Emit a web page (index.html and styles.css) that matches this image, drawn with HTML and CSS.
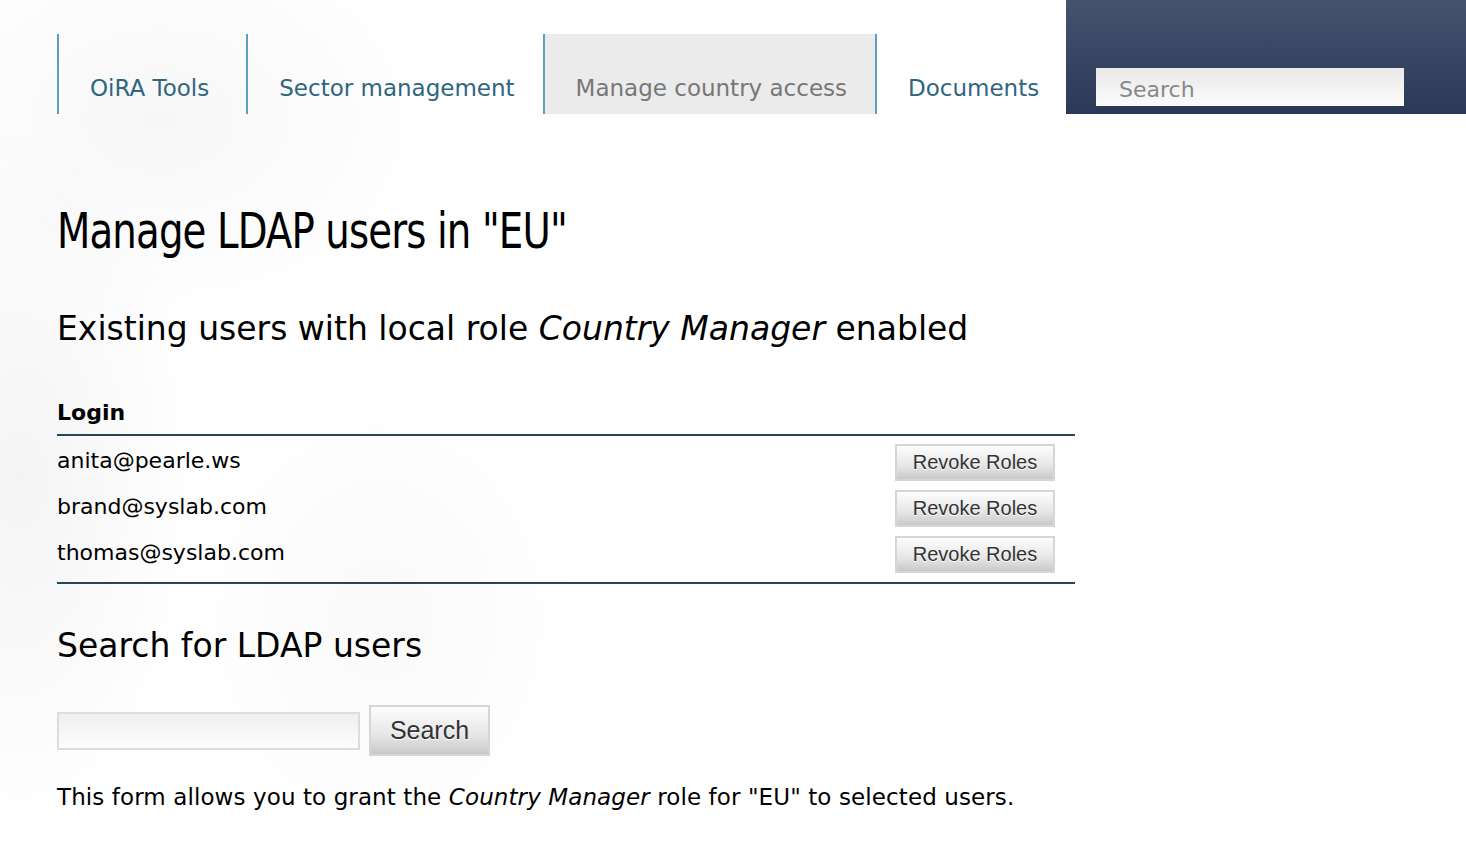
FILE: index.html
```html
<!DOCTYPE html>
<html lang="en">
<head>
<meta charset="utf-8">
<title>Manage LDAP users in "EU"</title>
<link rel="stylesheet" href="styles.css">
</head>
<body>
<div class="page">
  <header class="topbar">
    <nav class="tabs">
      <a class="tab" href="#">OiRA Tools</a>
      <a class="tab" href="#">Sector management</a>
      <a class="tab active" href="#">Manage country access</a>
      <a class="tab last" href="#">Documents</a>
    </nav>
    <div class="searchbox">
      <input class="site-search" type="text" placeholder="Search">
    </div>
  </header>

  <main class="content">
    <h1 class="title"><span class="title-text">Manage LDAP users in "EU"</span></h1>
    <h2 class="subtitle">Existing users with local role <em>Country Manager</em> enabled</h2>

    <table class="users">
      <thead>
        <tr><th class="login-col">Login</th><th class="action-col"></th></tr>
      </thead>
      <tbody>
        <tr><td>anita@pearle.ws</td><td class="action-col"><button class="btn small">Revoke Roles</button></td></tr>
        <tr><td>brand@syslab.com</td><td class="action-col"><button class="btn small">Revoke Roles</button></td></tr>
        <tr><td>thomas@syslab.com</td><td class="action-col"><button class="btn small">Revoke Roles</button></td></tr>
      </tbody>
    </table>

    <h2 class="subtitle search-title">Search for LDAP users</h2>
    <form class="search-form">
      <input class="user-search" type="text">
      <button class="btn large" type="button">Search</button>
    </form>
    <p class="note">This form allows you to grant the <em>Country Manager</em> role for "EU" to selected users.</p>
  </main>
</div>
</body>
</html>
```

FILE: styles.css
```css
html, body {
  margin: 0;
  padding: 0;
}
body {
  font-family: "DejaVu Sans", "Noto Sans", sans-serif;
  color: #000;
  background-color: #fff;
  background-image:
    radial-gradient(ellipse 260px 520px at 20px 480px, rgba(0,0,0,0.045), rgba(0,0,0,0) 70%),
    radial-gradient(ellipse 420px 300px at 160px 120px, rgba(0,0,0,0.03), rgba(0,0,0,0) 70%),
    radial-gradient(ellipse 300px 360px at 380px 620px, rgba(0,0,0,0.025), rgba(0,0,0,0) 70%);
  min-height: 868px;
}
.page {
  width: 1466px;
}
.topbar {
  display: flex;
  align-items: flex-start;
  height: 114px;
}
.tabs {
  display: flex;
  flex-shrink: 0;
  margin-top: 34px;
  margin-left: 57px;
  height: 80px;
}
.tab {
  display: flex;
  flex-shrink: 0;
  align-items: flex-end;
  white-space: nowrap;
  padding: 0 28px 12px 31px;
  box-sizing: border-box;
  height: 80px;
  border-left: 2px solid #5b9fc4;
  color: #2f6680;
  text-decoration: none;
  font-size: 23px;
  line-height: 28px;
}
.tab:first-child {
  padding-right: 37px;
}
.tab.last {
  padding-right: 26px;
}
.tab.active {
  background: #ebebeb;
  color: #777;
}
.searchbox {
  flex-shrink: 0;
  margin-left: auto;
  width: 400px;
  height: 114px;
  box-sizing: border-box;
  background: linear-gradient(#45536f, #2b3957);
  padding: 68px 62px 0 30px;
}
.site-search {
  width: 100%;
  height: 38px;
  box-sizing: border-box;
  border: none;
  outline: none;
  background: linear-gradient(#e9e9e9, #fbfbfb);
  padding: 4px 0 0 23px;
  font-family: "DejaVu Sans", sans-serif;
  font-size: 22px;
  color: #555;
}
.site-search::placeholder {
  color: #888;
}
.content {
  margin-left: 57px;
  width: 1018px;
}
.title {
  margin: 89px 0 0 0;
  font-weight: normal;
  font-size: 50px;
  font-stretch: condensed;
  line-height: 56px;
  letter-spacing: -1px;
  white-space: nowrap;
}
.title-text {
  display: inline-block;
  transform: scaleX(0.86);
  transform-origin: left center;
}
.subtitle {
  margin: 50px 0 0 0;
  font-weight: normal;
  font-size: 33px;
  line-height: 40px;
}
.users {
  width: 100%;
  margin-top: 51px;
  border-collapse: collapse;
  font-size: 22px;
}
.users th {
  text-align: left;
  padding: 0 0 8px 0;
  font-size: 22px;
  font-weight: bold;
  border-bottom: 2px solid #24475c;
  line-height: 26px;
}
.users td {
  padding: 4px 0 0 0;
  line-height: 42px;
  vertical-align: middle;
}
.users tbody tr:last-child td {
  border-bottom: 2px solid #24475c;
  padding-bottom: 8px;
}
.users td.action-col {
  text-align: right;
  padding-right: 20px;
}
.btn {
  font-family: "Liberation Sans", Arial, sans-serif;
  color: #333;
  text-shadow: 0 1px 0 #fff;
  border: 2px solid #d6d6d6;
  background: linear-gradient(#fdfdfd, #e6e6e6 60%, #c9c9c9);
  cursor: pointer;
  box-sizing: border-box;
  padding: 0;
  vertical-align: middle;
}
.btn.small {
  width: 160px;
  height: 37px;
  font-size: 20px;
}
.search-title {
  margin-top: 42px;
}
.search-form {
  display: flex;
  align-items: center;
  margin-top: 39px;
  gap: 9px;
}
.user-search {
  width: 303px;
  height: 38px;
  box-sizing: border-box;
  border: 2px solid #dcdcdc;
  background: linear-gradient(#efefef, #fdfdfd);
  outline: none;
}
.btn.large {
  width: 121px;
  height: 51px;
  font-size: 25px;
}
.note {
  margin: 26px 0 0 0;
  font-size: 23px;
  line-height: 30px;
  letter-spacing: 0.1px;
}
```
